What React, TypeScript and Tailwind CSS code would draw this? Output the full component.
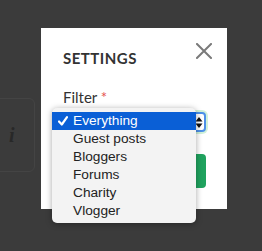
const options = ["Everything", "Guest posts", "Bloggers", "Forums", "Charity", "Vlogger"];

function CloseIcon() {
  return (
    <svg width="16" height="16" viewBox="0 0 16 16" className="block">
      <path d="M1 1 L15 15 M15 1 L1 15" stroke="#7a7a7a" strokeWidth="2" strokeLinecap="square" />
    </svg>
  );
}

function Stepper() {
  return (
    <svg width="8" height="13" viewBox="0 0 8 13" className="block">
      <path d="M4 1 L7.5 5.5 H0.5 Z" fill="#111" />
      <path d="M4 12 L7.5 7.5 H0.5 Z" fill="#111" />
    </svg>
  );
}

function Check() {
  return (
    <svg width="10" height="10" viewBox="0 0 10 10" className="block">
      <path d="M1 5.5 L3.8 8.5 L9 1.2" stroke="#fff" strokeWidth="2.2" fill="none" strokeLinecap="round" strokeLinejoin="round" />
    </svg>
  );
}

export default function App() {
  return (
    <div className="relative h-[251px] w-[262px] overflow-hidden bg-[#3b3b3b] font-['Lato',sans-serif]">
      {/* dimmed page behind the overlay */}
      <div className="absolute -left-4 -top-6 h-[17px] w-[51px] rounded-md border border-[#444]" />
      <div className="absolute -left-4 top-[98px] h-[74px] w-[51px] rounded-md border border-[#444]">
        <span className="absolute left-[24px] top-[26px] font-['Liberation_Serif',serif] text-[20px] font-bold italic leading-none text-[#282828]">
          i
        </span>
      </div>

      <div className="relative pl-[41px] pt-[28px]">
        <div className="relative flex w-[186px] flex-col bg-white px-[22px] pb-[21px] pt-[21px]">
          <div className="flex items-start justify-between">
            <h2 className="text-[15px] font-bold leading-[18px] tracking-[0.5px] text-[#333]">SETTINGS</h2>
            <button className="-mr-[7px] -mt-[6px]">
              <CloseIcon />
            </button>
          </div>

          <label className="mt-[21px] text-[15px] leading-[18px] text-[#333]">
            Filter <span className="text-[#e5534b]">*</span>
          </label>

          <div className="mt-[6px] flex h-[20px] w-[143px] items-center justify-end rounded-[4px] border-2 border-[#4d90e8] bg-white pr-[1px] shadow-[0_0_0_2px_rgba(150,225,170,0.45)]">
            <Stepper />
          </div>

          <div className="mt-[22px] h-[34px] w-[143px] rounded-[4px] bg-[#1fa25e]" />

          {/* open select menu */}
          <ul className="absolute left-[11px] top-[80px] w-[144px] rounded-[5px] bg-[#f3f3f3] pb-[3px] pt-[4px] font-['Liberation_Sans',Arial,sans-serif] text-[13.7px] text-[#222] shadow-[0_1px_6px_rgba(0,0,0,0.35)]">
            {options.map((o, i) => (
              <li
                key={o}
                className={
                  i === 0
                    ? "flex h-[18px] items-center bg-[#0a5fd6] text-white"
                    : "flex h-[18px] items-center"
                }
              >
                <span className="flex w-[21px] justify-start pl-[6px]">{i === 0 && <Check />}</span>
                {o}
              </li>
            ))}
          </ul>
        </div>
      </div>
    </div>
  );
}
